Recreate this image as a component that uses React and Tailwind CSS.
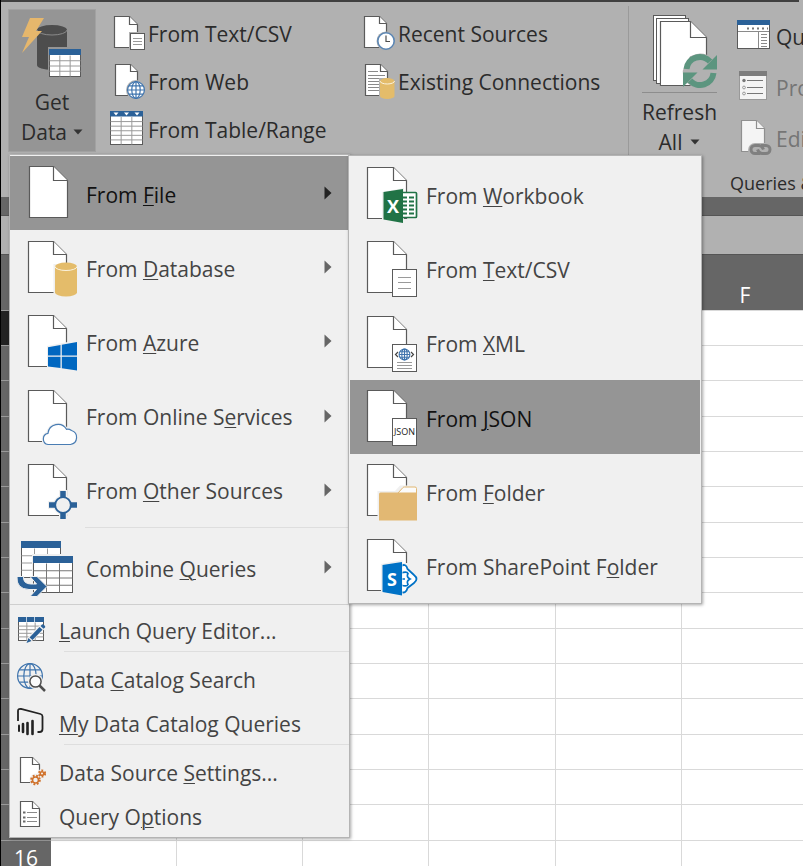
import React from "react";

const BLUE = "#2b6198";
const SANS = "font-['Open_Sans','Noto_Sans',sans-serif]";

/* ---------- drawing helpers ---------- */

function Doc({ x, y, w, h, f, fill = "#fff", stroke = "#5a5a5a" }) {
  return (
    <g fill={fill} stroke={stroke} strokeWidth="1.2">
      <path d={`M${x} ${y}H${x + w - f}L${x + w} ${y + f}V${y + h}H${x}Z`} />
      <path d={`M${x + w - f} ${y}V${y + f}H${x + w}`} />
    </g>
  );
}

function Cylinder({ x, y, w, h, ry, fill, line }) {
  const r = w / 2;
  return (
    <g>
      <path
        d={`M${x} ${y + ry}A${r} ${ry} 0 0 1 ${x + w} ${y + ry}V${y + h - ry}A${r} ${ry} 0 0 1 ${x} ${y + h - ry}Z`}
        fill={fill}
      />
      <path d={`M${x} ${y + ry}A${r} ${ry} 0 0 0 ${x + w} ${y + ry}`} fill="none" stroke={line} strokeWidth="1" />
    </g>
  );
}

function Table({ x, y, w, h, head, cols, rows, line = "#9a9a9a" }) {
  const v = Array.from({ length: cols - 1 }, (_, i) => x + ((i + 1) * w) / cols);
  const r = Array.from({ length: rows - 1 }, (_, i) => y + head + ((i + 1) * (h - head)) / rows);
  return (
    <g>
      <rect x={x} y={y} width={w} height={h} fill="#fff" stroke="#5a5a5a" />
      <g stroke={line} strokeWidth="1">
        {v.map((n) => (
          <path key={n} d={`M${n} ${y + head}V${y + h}`} />
        ))}
        {r.map((n) => (
          <path key={n} d={`M${x} ${n}H${x + w}`} />
        ))}
      </g>
      <rect x={x - 0.5} y={y - 0.5} width={w + 1} height={head} fill={BLUE} />
    </g>
  );
}

function Globe({ cx, cy, r, bg = "#fff", sw = 1.2 }) {
  const k = r * 0.5;
  const c = r * 0.86;
  return (
    <g fill="none" stroke="#3f74ad" strokeWidth={sw}>
      <circle cx={cx} cy={cy} r={r} fill={bg} />
      <ellipse cx={cx} cy={cy} rx={k} ry={r} />
      <path
        d={`M${cx - r} ${cy}H${cx + r}M${cx} ${cy - r}V${cy + r}M${cx - c} ${cy - k}H${cx + c}M${cx - c} ${cy + k}H${cx + c}`}
      />
    </g>
  );
}

function Svg({ w, h, children }) {
  return (
    <svg width={w} height={h} viewBox={`0 0 ${w} ${h}`} className="block shrink-0" aria-hidden="true">
      {children}
    </svg>
  );
}

/* ---------- ribbon icons ---------- */

const getDataIcon = (
  <Svg w={64} h={64}>
    <Cylinder x={17} y={9} w={30} h={45} ry={5} fill="#4d4d4d" line="#8a8a8a" />
    <path d="M10 2H24L16 15H22L2 37L9 21H2Z" fill="#e6b76c" />
    <rect x="28" y="31" width="35" height="31" fill="#959595" />
    <Table x={29.5} y={33.5} w={31} h={27} head={6} cols={3} rows={4} />
  </Svg>
);

const textCsvIcon = (
  <Svg w={36} h={40}>
    <Doc x={5.5} y={3.5} w={23} h={31} f={8} />
    <rect x="20" y="19" width="16" height="19" fill="#b1b1b1" />
    <rect x="21.5" y="20.5" width="14" height="16" fill="#fff" stroke="#5a5a5a" />
    <path d="M24 25.5H33M24 28.5H33M24 31.5H33" stroke="#9a9a9a" />
  </Svg>
);

const webIcon = (
  <Svg w={36} h={40}>
    <Doc x={6.5} y={3.5} w={22} h={31} f={7} />
    <circle cx="27" cy="29" r="10" fill="#b1b1b1" />
    <Globe cx={27} cy={29} r={8.4} />
  </Svg>
);

const tableRangeIcon = (
  <Svg w={36} h={40}>
    <Table x={1.5} y={2.5} w={32} h={33} head={5.5} cols={3} rows={6} />
    <path d="M4.500 3.500h5l-2.500 3zM15 3.500h5l-2.500 3zM25.500 3.500h5l-2.500 3z" fill="#fff" />
  </Svg>
);

const recentIcon = (
  <Svg w={36} h={40}>
    <Doc x={5.5} y={3.5} w={22} h={31} f={7} />
    <circle cx="27" cy="28" r="9.500" fill="#b1b1b1" />
    <circle cx="27" cy="28" r="8.200" fill="#fff" stroke="#5b86b4" strokeWidth="1.600" />
    <path d="M27 22.500V28.500H31" fill="none" stroke="#4d4d4d" strokeWidth="1.200" />
  </Svg>
);

const existingIcon = (
  <Svg w={36} h={40}>
    <Doc x={6.5} y={3.5} w={22} h={31} f={7} />
    <path d="M9 10.500H19M9 14.500H26M9 17.500H26M9 20.500H26M9 23.500H26M9 26.500H26M9 29.500H26" stroke="#8a8a8a" />
    <rect x="20" y="17" width="16" height="22" fill="#b1b1b1" />
    <Cylinder x={21} y={17} w={14.500} h={21} ry={3} fill="#e4bc6a" line="#fbf3df" />
  </Svg>
);

const refreshIcon = (
  <Svg w={74} h={78}>
    <path d="M10.500 3.500H41M10.500 3V68.500" stroke="#5a5a5a" />
    <rect x="10.500" y="3.500" width="32" height="65" fill="#fff" stroke="#5a5a5a" />
    <rect x="13.500" y="6.500" width="32" height="65" fill="#fff" stroke="#5a5a5a" />
    <Doc x={17.5} y={9.5} w={46} h={64} f={16} />
    <circle cx="57" cy="59" r="17.500" fill="#b1b1b1" />
    <path d="M17.500 42V73.500H40V72L39.500 59L47 44L57 41V32H19V73" fill="#fff" />
    <path d="M17.500 42V73.500H40" stroke="#5a5a5a" fill="none" />
    <path d="M43.500 57A13.500 13.500 0 0 1 67 49.500" fill="none" stroke="#5c957f" strokeWidth="6" />
    <path d="M74 43V57.500H59.500Z" fill="#5c957f" />
    <path d="M70.500 61A13.500 13.500 0 0 1 47 68.500" fill="none" stroke="#5c957f" strokeWidth="6" />
    <path d="M40 75V60.500H54.500Z" fill="#5c957f" />
  </Svg>
);

const queriesIcon = (
  <Svg w={38} h={42}>
    <rect x="2.500" y="5.500" width="32" height="28" fill="#fff" stroke="#5a5a5a" />
    <rect x="2" y="5" width="33" height="5" fill={BLUE} />
    <path d="M12 13.500H33" stroke="#777" strokeWidth="2" strokeDasharray="2 3" />
    <path d="M3 16.500H34M23.500 16.500V33" stroke="#8a8a8a" />
    <path d="M26 19.500H32M26 22.500H32M26 25.500H32M26 28.500H32M26 31.500H32" stroke="#8a8a8a" />
  </Svg>
);

const propertiesIcon = (
  <Svg w={38} h={42}>
    <rect x="4.500" y="5.500" width="27" height="28" fill="#f4f4f4" stroke="#999" />
    <rect x="4" y="5" width="28" height="5" fill="#7d7d7d" />
    <path d="M12 14.500H28M12 21.500H28M12 27.500H28" stroke="#777" />
    <circle cx="9" cy="14.500" r="1.700" fill="#777" />
    <circle cx="9" cy="21.500" r="1.400" fill="none" stroke="#999" />
    <circle cx="9" cy="27.500" r="1.400" fill="none" stroke="#999" />
  </Svg>
);

const editLinksIcon = (
  <Svg w={38} h={42}>
    <Doc x={6.5} y={3.5} w={23} h={31} f={8} fill="#f4f4f4" stroke="#8f8f8f" />
    <rect x="13" y="26" width="25" height="14" rx="7" fill="#b1b1b1" />
    <g fill="none" stroke="#808080" strokeWidth="3">
      <path d="M25 36.500H20a4 4 0 0 1 0-8h4q3 0 4.500 4" />
      <path d="M26 28.500h5a4 4 0 0 1 0 8h-4q-3 0-4.500-4" />
    </g>
  </Svg>
);

/* ---------- menu icons ---------- */

const BigDoc = () => <Doc x={12.5} y={4.5} w={38} h={51} f={13} />;

const fileIcon = (
  <Svg w={62} h={60}>
    <Doc x={13.5} y={3.5} w={38} h={51} f={14} />
  </Svg>
);

const databaseIcon = (
  <Svg w={62} h={60}>
    <BigDoc />
    <rect x="37.500" y="27" width="24.500" height="32" fill="#f0f0f0" />
    <Cylinder x={39} y={25.5} w={22} h={34} ry={4} fill="#e4bc6a" line="#fbf3df" />
  </Svg>
);

const azureIcon = (
  <Svg w={62} h={60}>
    <BigDoc />
    <path d="M31 35L62 29V60L31 56Z" fill="#f0f0f0" />
    <path d="M32 36.300L44.500 34V44.500H32ZM45.800 33.800L61 31V44.500H45.800ZM32 45.800H44.500V57L32 55.500ZM45.800 45.800H61V59.500L45.800 57.200Z" fill="#0067c0" />
  </Svg>
);

const cloudPath = "M32 58.500a5.700 5.700 0 0 1 0-11.200a10 10 0 0 1 18.500-4a7 7 0 0 1 5 1.200a7.200 7.200 0 0 1-1 14z";
const cloudIcon = (
  <Svg w={62} h={60}>
    <BigDoc />
    <path d={cloudPath} fill="#fff" stroke="#f0f0f0" strokeWidth="3.500" />
    <path d={cloudPath} fill="#fff" stroke="#4a7db3" strokeWidth="1.200" />
  </Svg>
);

const otherIcon = (
  <Svg w={62} h={60}>
    <BigDoc />
    <path d="M47 30V60M32 45H62" stroke="#f0f0f0" strokeWidth="8" />
    <circle cx="47" cy="45" r="10" fill="#f0f0f0" />
    <path d="M47 31V38M47 52V59M33 45H40M54 45H61" stroke={BLUE} strokeWidth="5.500" />
    <circle cx="47" cy="45" r="7.800" fill="#f0f0f0" stroke={BLUE} strokeWidth="1.800" />
  </Svg>
);

const combineIcon = (
  <Svg w={62} h={60}>
    <Table x={5.5} y={4.5} w={39} h={36} head={7} cols={3} rows={4} />
    <rect x="16" y="17" width="44" height="40" fill="#f0f0f0" />
    <Table x={17.5} y={19.5} w={39} h={36} head={7} cols={3} rows={4} line="#777" />
    <path d="M1 39.500H7.500Q7 47 15 47H20.500L14 39.500H21L31 49.500L21 59.500H14L20.500 52.500H13Q0 52 1 39.500Z" fill={BLUE} stroke="#f0f0f0" strokeWidth="1" />
  </Svg>
);

const SubDoc = () => <Doc x={2.5} y={3.5} w={39} h={51} f={13} />;

const workbookIcon = (
  <Svg w={54} h={60}>
    <SubDoc />
    <path d="M17 28L39 24V60L17 56Z" fill="#f0f0f0" />
    <rect x="36" y="28.500" width="15.500" height="25" rx="1" fill="#fff" stroke="#217346" strokeWidth="1.700" />
    <path d="M38 33.500H42M38 37.500H42M38 41.500H42M38 45.500H42M38 49.500H42M44 33.500H49M44 37.500H49M44 41.500H49M44 45.500H49M44 49.500H49" stroke="#217346" strokeWidth="2" />
    <path d="M18.500 28L38 25V59L18.500 55.500Z" fill="#217346" />
    <text x="28" y="48.500" textAnchor="middle" fontFamily="Open Sans, sans-serif" fontWeight="700" fontSize="18" fill="#fff">X</text>
  </Svg>
);

const subTextIcon = (
  <Svg w={54} h={60}>
    <SubDoc />
    <rect x="27.500" y="31.500" width="24" height="27" fill="#fff" stroke="#5a5a5a" />
    <path d="M33 39.500H46M33 44.500H46M33 50.500H46" stroke="#9a9a9a" />
  </Svg>
);

const xmlIcon = (
  <Svg w={54} h={60}>
    <SubDoc />
    <rect x="27.500" y="31.500" width="24" height="27" fill="#fff" stroke="#5a5a5a" />
    <Globe cx={39.5} cy={41.5} r={5.4} sw={1.1} />
    <path d="M33 39L30.500 41.500L33 44M46 39L48.500 41.500L46 44" fill="none" stroke="#444" strokeWidth="1.200" />
    <path d="M32 49.500H47M32 52.500H47M32 55.500H47" stroke="#9a9a9a" />
  </Svg>
);

const jsonIcon = (
  <Svg w={54} h={60}>
    <SubDoc />
    <rect x="27.500" y="31.500" width="24" height="27" fill="#fff" stroke="#5a5a5a" />
    <text x="39.500" y="48" textAnchor="middle" fontFamily="Open Sans, sans-serif" fontSize="9" fill="#222">JSON</text>
  </Svg>
);

const folderIcon = (
  <Svg w={54} h={60}>
    <SubDoc />
    <path d="M12.500 30H30L35 24.500H54V59.500H12.500Z" fill="#f0f0f0" />
    <path d="M33 32L38 26.500Q38.500 26 39.500 26H50Q51.500 26 51.500 27.500V33H33Z" fill="#fbfbfb" stroke="#e2b873" />
    <path d="M14 33Q14 31.500 15.500 31.500H52V59.500H14Z" fill="#e2b873" />
  </Svg>
);

const sharePointIcon = (
  <Svg w={54} h={60}>
    <SubDoc />
    <path d="M36 27H44L54 40V46L44 57H36Z" fill="#f0f0f0" />
    <path d="M36 30Q41 27 42.500 33L49 39Q54 43 49 47L42.500 52Q41 58 36 56Z" fill="#fff" stroke="#0072c6" strokeWidth="1.800" />
    <path d="M36 37Q42 35 43 37.500Q41 41 45 43Q41 45 43 48.500Q42 51 36 49" fill="none" stroke="#0072c6" strokeWidth="1.700" />
    <path d="M36 43H40" stroke="#0072c6" strokeWidth="1.500" />
    <path d="M16 28L37.500 24V61L16 57Z" fill="#f0f0f0" />
    <path d="M17.500 29L37 26V59.500L17.500 56Z" fill="#0072c6" />
    <text x="27" y="49.500" textAnchor="middle" fontFamily="Open Sans, sans-serif" fontWeight="700" fontSize="18" fill="#fff">S</text>
  </Svg>
);

const launchIcon = (
  <Svg w={30} h={32}>
    <Table x={2.5} y={4.5} w={25} h={23} head={5} cols={3} rows={5} />
    <path d="M10.500 4V9M18.500 4V9" stroke="#b9cfe4" strokeWidth="1" />
    <path d="M10 30L12 24L25 11L29.500 15L16 28Z" fill="#f0f0f0" />
    <path d="M10.500 30L12.500 25L15.500 28ZM13.500 24.500L23.500 14L26.500 16.700L16.500 27ZM24.500 13L26 11.500Q27 11 28 12L29 13Q29.500 14 29 14.500L27.500 15.800Z" fill={BLUE} />
  </Svg>
);

const catalogIcon = (
  <Svg w={30} h={32}>
    <Globe cx={14} cy={14} r={12.4} bg="none" />
    <circle cx="19.500" cy="19.500" r="7.500" fill="#f0f0f0" />
    <circle cx="19.500" cy="19.500" r="5.600" fill="#fbfbfb" stroke="#4d4d4d" strokeWidth="1.500" />
    <path d="M23.500 23.500L29 29" stroke="#4d4d4d" strokeWidth="2.500" />
  </Svg>
);

const powerBiIcon = (
  <Svg w={30} h={32}>
    <path d="M2 15V5Q2 2.500 5 3L24.500 8Q26.500 8.500 26.500 10.500V23Q26.500 26 23.500 26H21.500" fill="none" stroke="#222" strokeWidth="1.800" />
    <path d="M3 19.500V25" stroke="#222" strokeWidth="2" strokeLinecap="round" />
    <path d="M7 18V26M11.500 17V28M16.500 15V28" stroke="#222" strokeWidth="2.600" strokeLinecap="round" />
  </Svg>
);

function Gear({ cx, cy, r }) {
  return (
    <g stroke="#d0722c" fill="none">
      <circle cx={cx} cy={cy} r={r + 1.3} strokeWidth="2" strokeDasharray="1.800 1.600" />
      <circle cx={cx} cy={cy} r={r} strokeWidth="1.600" />
    </g>
  );
}

const sourceSettingsIcon = (
  <Svg w={30} h={32}>
    <Doc x={4.5} y={2.5} w={19} h={25} f={7} />
    <circle cx="20" cy="25" r="6.500" fill="#f0f0f0" />
    <circle cx="26" cy="18.500" r="4.500" fill="#f0f0f0" />
    <Gear cx={19.5} cy={25} r={3} />
    <Gear cx={26} cy={18.5} r={1.8} />
  </Svg>
);

const optionsIcon = (
  <Svg w={30} h={32}>
    <Doc x={4.5} y={2.5} w={19} h={25} f={7} />
    <path d="M11 13.500H21M11 18.500H21M11 22.500H21" stroke="#8a8a8a" />
    <path d="M7 13.500H9.500M7 18.500H9.500M7 22.500H9.500" stroke="#6a6a6a" strokeWidth="2" />
  </Svg>
);

/* ---------- ribbon ---------- */

function DownCaret() {
  return (
    <svg width="10" height="6" viewBox="0 0 10 6" className="shrink-0" aria-hidden="true">
      <path d="M0.500 0.500H9.500L5 5.500Z" fill="#333" />
    </svg>
  );
}

function RibbonItem({ icon, label, disabled }) {
  return (
    <button
      type="button"
      disabled={disabled}
      className="flex h-full items-center gap-[3px] text-left text-[#2b2b2b] disabled:text-[#757575]"
    >
      {icon}
      <span className="pt-0.5">{label}</span>
    </button>
  );
}

function Ribbon() {
  return (
    <header className="h-[197px] overflow-hidden bg-[#b1b1b1]">
      <div className="mr-1 h-0.5 bg-[#404040]" />
      <div className="flex items-start pl-[7px] text-[#2b2b2b]">
        <button
          type="button"
          className="mt-[7px] flex h-[143px] w-[88px] shrink-0 flex-col items-center border border-[#a2a2a2] bg-[#959595] pt-1.5 leading-[30px]"
        >
          {getDataIcon}
          <span className="mt-[7px]">Get</span>
          <span className="flex items-center gap-1.5">
            Data
            <DownCaret />
          </span>
        </button>

        <div className="mt-[7px] ml-[13px] grid w-[250px] shrink-0 auto-rows-[48px]">
          <RibbonItem icon={textCsvIcon} label="From Text/CSV" />
          <RibbonItem icon={webIcon} label="From Web" />
          <RibbonItem icon={tableRangeIcon} label="From Table/Range" />
        </div>
        <div className="mt-[7px] grid w-[269px] shrink-0 auto-rows-[48px]">
          <RibbonItem icon={recentIcon} label="Recent Sources" />
          <RibbonItem icon={existingIcon} label="Existing Connections" />
        </div>

        <div className="mt-1 h-[180px] w-px shrink-0 bg-[#9a9a9a]" />

        <section className="ml-[13px] shrink-0">
          <div className="flex">
            <button type="button" className="flex w-[75px] flex-col items-center pt-[10px] leading-[30px]">
              {refreshIcon}
              <span className="mt-0.5 mb-1 h-px w-full bg-[#8d8d8d]" />
              <span>Refresh</span>
              <span className="flex items-center gap-2">
                All
                <DownCaret />
              </span>
            </button>
            <div className="ml-[18px] grid auto-rows-[51px] pt-2">
              <RibbonItem icon={queriesIcon} label="Queries & Connections" />
              <RibbonItem icon={propertiesIcon} label="Properties" disabled />
              <RibbonItem icon={editLinksIcon} label="Edit Links" disabled />
            </div>
          </div>
          <p className="pt-1.5 pl-[88px] text-[18px] leading-[28px]">Queries &amp; Connections</p>
        </section>
      </div>
    </header>
  );
}

/* ---------- worksheet ---------- */

const columns = ["A", "B", "C", "D", "E", "F"];

function Sheet() {
  return (
    <main>
      <div className="h-[18px] bg-[#666]" />
      <div className="h-10 border-t border-b border-[#555] bg-[#b1b1b1]" />
      <table className="w-[807px] table-fixed border-separate border-spacing-0">
        <thead>
          <tr className="h-[55px] bg-[#666] text-white">
            <th className="w-[50px]" />
            {columns.map((c) => (
              <th key={c} className="p-0 pb-0.5 align-bottom leading-[26px] font-normal">
                {c === "F" ? c : null}
              </th>
            ))}
          </tr>
        </thead>
        <tbody>
          {Array.from({ length: 17 }, (_, i) => i + 1).map((n) => (
            <tr key={n} className="h-[35px] [&:nth-child(3n)]:h-[36px]">
              <th
                className={
                  "border-t border-[#9a9a9a] p-0 leading-[30px] font-normal text-white " +
                  (n === 1 ? "bg-[#222]" : "bg-[#666]")
                }
              >
                {n === 16 ? n : null}
              </th>
              {columns.map((c) => (
                <td key={c} className="border-t border-r border-[#d9d9d9] bg-white p-0" />
              ))}
            </tr>
          ))}
        </tbody>
      </table>
    </main>
  );
}

/* ---------- menus ---------- */

/* The letter after "_" is the item's access key. */
function Label({ text }) {
  const [before, rest] = text.split("_");
  return (
    <span className="flex-1 pt-[3px]">
      {before}
      <u className="decoration-1 underline-offset-2">{rest[0]}</u>
      {rest.slice(1)}
    </span>
  );
}

function RightCaret() {
  return (
    <svg width="8" height="14" viewBox="0 0 8 14" className="shrink-0" aria-hidden="true">
      <path d="M0.500 0.500L7.500 7L0.500 13.500Z" fill="currentColor" />
    </svg>
  );
}

function BigItem({ icon, text, active }) {
  return (
    <button
      type="button"
      role="menuitem"
      className={
        "flex w-full items-center gap-2 pr-[17px] pl-1.5 text-left " +
        (active ? "bg-[#959595] text-[#111]" : "text-[#444]")
      }
    >
      {icon}
      <Label text={text} />
      <span className={active ? "text-[#222]" : "text-[#666]"}>
        <RightCaret />
      </span>
    </button>
  );
}

function SubItem({ icon, text, active }) {
  return (
    <button
      type="button"
      role="menuitem"
      className={
        "flex w-full items-center gap-[7px] pl-[15px] text-left " +
        (active ? "bg-[#959595] text-[#111]" : "text-[#444]")
      }
    >
      {icon}
      <Label text={text} />
    </button>
  );
}

function SmallItem({ icon, text }) {
  return (
    <button
      type="button"
      role="menuitem"
      className="flex h-[44px] w-full items-center gap-[13px] pl-1.5 text-left text-[#444]"
    >
      {icon}
      <Label text={text} />
    </button>
  );
}

function GetDataMenu() {
  return (
    <div
      role="menu"
      aria-label="Get Data"
      className="absolute top-[154px] left-2 w-[341px] border border-[#b4b4b4] bg-[#f0f0f0] pt-px shadow-[1px_1px_3px_rgba(0,0,0,0.35)]"
    >
      <div className="grid h-[371px] auto-rows-fr">
        <BigItem icon={fileIcon} text="From _File" active />
        <BigItem icon={databaseIcon} text="From _Database" />
        <BigItem icon={azureIcon} text="From _Azure" />
        <BigItem icon={cloudIcon} text="From Online S_ervices" />
        <BigItem icon={otherIcon} text="From _Other Sources" />
      </div>
      <hr className="ml-[75px] border-[#dedede]" />
      <div className="grid h-[76px] pt-0.5">
        <BigItem icon={combineIcon} text="Combine _Queries" />
      </div>
      <hr className="mb-0.5 border-[#cfcfcf]" />
      <SmallItem icon={launchIcon} text="_Launch Query Editor..." />
      <hr className="mb-1 ml-[54px] border-[#dedede]" />
      <SmallItem icon={catalogIcon} text="Data _Catalog Search" />
      <SmallItem icon={powerBiIcon} text="_My Data Catalog Queries" />
      <hr className="mb-1 ml-[54px] border-[#dedede]" />
      <SmallItem icon={sourceSettingsIcon} text="Data Source _Settings..." />
      <SmallItem icon={optionsIcon} text="Query O_ptions" />
    </div>
  );
}

function FromFileMenu() {
  return (
    <div
      role="menu"
      aria-label="From File"
      className="absolute top-[155px] left-[347px] w-[354px] border border-[#b4b4b4] bg-[#f0f0f0] px-px pt-px shadow-[1px_1px_3px_rgba(0,0,0,0.35)]"
    >
      <div className="grid h-[446px] auto-rows-fr">
        <SubItem icon={workbookIcon} text="From _Workbook" />
        <SubItem icon={subTextIcon} text="From _Text/CSV" />
        <SubItem icon={xmlIcon} text="From _XML" />
        <SubItem icon={jsonIcon} text="From _JSON" active />
        <SubItem icon={folderIcon} text="From _Folder" />
        <SubItem icon={sharePointIcon} text="From SharePoint F_older" />
      </div>
    </div>
  );
}

export default function App() {
  return (
    <div
      className={
        "relative h-screen overflow-hidden border-l border-black bg-white text-[21px] leading-[28px] whitespace-nowrap " +
        SANS
      }
    >
      <Ribbon />
      <Sheet />
      <GetDataMenu />
      <FromFileMenu />
    </div>
  );
}
